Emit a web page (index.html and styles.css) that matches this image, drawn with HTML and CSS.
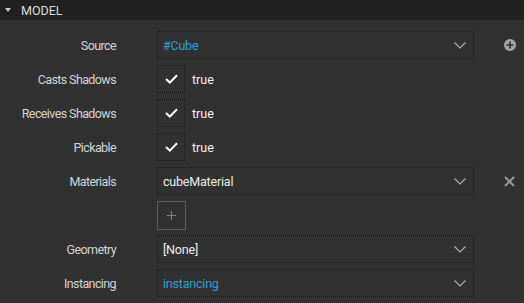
FILE: index.html
```html
<!DOCTYPE html>
<html>
<head>
<meta charset="utf-8">
<link rel="stylesheet" href="styles.css">
</head>
<body>
<div class="panel">
  <div class="header">
    <span class="caret"></span>
    <span class="title">MODEL</span>
  </div>
  <div class="fields">
    <div class="row">
      <div class="label">Source</div>
      <div class="select"><span class="value link">#Cube</span><svg class="chev" width="12" height="7" viewBox="0 0 12 7"><path d="M0.5 0.5 L6 6 L11.5 0.5" fill="none" stroke="#a9b0bb" stroke-width="1.2"/></svg></div>
      <div class="side"><svg width="12" height="12" viewBox="0 0 12 12"><circle cx="6" cy="6" r="6" fill="#a5a5a8"/><path d="M6 2.5 V9.5 M2.5 6 H9.5" stroke="#2e2e2e" stroke-width="1.6"/></svg></div>
    </div>
    <div class="row">
      <div class="label">Casts Shadows</div>
      <div class="check"><svg width="13" height="10" viewBox="0 0 13 10"><path d="M1 5 L4.8 8.6 L12 1.2" fill="none" stroke="#fff" stroke-width="2"/></svg></div>
      <span class="bool">true</span>
    </div>
    <div class="row">
      <div class="label">Receives Shadows</div>
      <div class="check"><svg width="13" height="10" viewBox="0 0 13 10"><path d="M1 5 L4.8 8.6 L12 1.2" fill="none" stroke="#fff" stroke-width="2"/></svg></div>
      <span class="bool">true</span>
    </div>
    <div class="row">
      <div class="label">Pickable</div>
      <div class="check"><svg width="13" height="10" viewBox="0 0 13 10"><path d="M1 5 L4.8 8.6 L12 1.2" fill="none" stroke="#fff" stroke-width="2"/></svg></div>
      <span class="bool">true</span>
    </div>
    <div class="row">
      <div class="label">Materials</div>
      <div class="select"><span class="value">cubeMaterial</span><svg class="chev" width="12" height="7" viewBox="0 0 12 7"><path d="M0.5 0.5 L6 6 L11.5 0.5" fill="none" stroke="#a9b0bb" stroke-width="1.2"/></svg></div>
      <div class="side"><svg width="11" height="11" viewBox="0 0 11 11"><path d="M1 1 L10 10 M10 1 L1 10" stroke="#9a9a9c" stroke-width="2"/></svg></div>
    </div>
    <div class="row">
      <div class="label"></div>
      <div class="addbtn"><svg width="9" height="9" viewBox="0 0 9 9"><path d="M4.5 0 V9 M0 4.5 H9" stroke="#7a7f88" stroke-width="1.2"/></svg></div>
    </div>
    <div class="row">
      <div class="label">Geometry</div>
      <div class="select"><span class="value">[None]</span><svg class="chev" width="12" height="7" viewBox="0 0 12 7"><path d="M0.5 0.5 L6 6 L11.5 0.5" fill="none" stroke="#a9b0bb" stroke-width="1.2"/></svg></div>
    </div>
    <div class="row">
      <div class="label">Instancing</div>
      <div class="select"><span class="value link">instancing</span><svg class="chev" width="12" height="7" viewBox="0 0 12 7"><path d="M0.5 0.5 L6 6 L11.5 0.5" fill="none" stroke="#a9b0bb" stroke-width="1.2"/></svg></div>
    </div>
  </div>
</div>
</body>
</html>
```
FILE: styles.css
```css
html, body {
  margin: 0;
  padding: 0;
  background: #313131;
  font-family: Roboto, "Liberation Sans", Arial, sans-serif;
  font-size: 12.5px;
  color: #d2d2d2;
}
.panel {
  width: 524px;
  height: 303px;
  overflow: hidden;
}
.header {
  height: 20px;
  background: #202020;
  display: flex;
  align-items: center;
}
.caret {
  width: 0;
  height: 0;
  margin-left: 5px;
  border-left: 3.5px solid transparent;
  border-right: 3.5px solid transparent;
  border-top: 4px solid #c8c8c8;
}
.title {
  margin-left: 10px;
  color: #dcdcdc;
  font-size: 12.5px;
}
.fields {
  padding-top: 11px;
  display: flex;
  flex-direction: column;
  gap: 6px;
}
.row {
  display: flex;
  align-items: center;
  height: 28px;
}
.label {
  width: 116px;
  margin-right: 41px;
  text-align: right;
  color: #d4d4d4;
  letter-spacing: -0.6px;
}
.select {
  width: 317px;
  height: 28px;
  box-sizing: border-box;
  border: 1px dotted #1a1a1a;
  display: flex;
  align-items: center;
  justify-content: space-between;
  padding: 0 7px 0 5px;
}
.value {
  color: #ececec;
  letter-spacing: -0.2px;
}
.value.link {
  color: #2f9fd2;
}
.chev {
  display: block;
}
.side {
  margin-left: 29px;
  width: 13px;
  display: flex;
  align-items: center;
  justify-content: center;
}
.check {
  width: 28px;
  height: 28px;
  box-sizing: border-box;
  border: 1px dotted #1a1a1a;
  display: flex;
  align-items: center;
  justify-content: center;
}
.bool {
  margin-left: 7px;
  color: #f2f2f2;
}
.addbtn {
  width: 29px;
  height: 29px;
  box-sizing: border-box;
  border: 1px solid #5c5c5c;
  display: flex;
  align-items: center;
  justify-content: center;
}
```
